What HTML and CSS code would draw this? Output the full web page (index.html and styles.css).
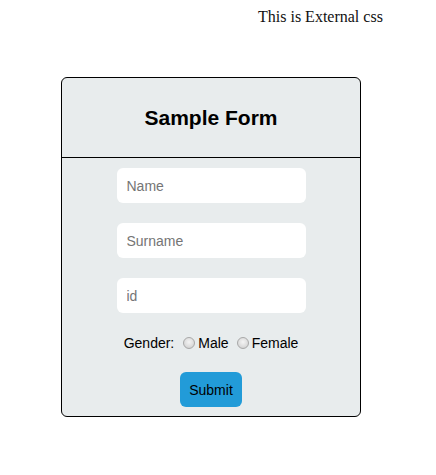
FILE: index.html
```html
<!DOCTYPE html>
<html>
<head>
<meta charset="utf-8">
<link rel="stylesheet" href="styles.css">
</head>
<body>
<div class="ext">This is External css</div>
<form class="card">
  <div class="card-head"><h2 class="title">Sample Form</h2></div>
  <div class="card-body">
    <input class="field" type="text" placeholder="Name">
    <input class="field" type="text" placeholder="Surname">
    <input class="field" type="text" placeholder="id">
    <div class="gender">
      <span class="lbl">Gender:</span>
      <label class="opt"><input class="radio" type="radio" name="g">Male</label>
      <label class="opt"><input class="radio" type="radio" name="g">Female</label>
    </div>
    <button class="submit" type="button">Submit</button>
  </div>
</form>
</body>
</html>
```
FILE: styles.css
```css
body {
  margin: 8px;
  font-family: "Liberation Serif", "Times New Roman", serif;
  background: #fff;
}
.ext {
  font-size: 16px;
  line-height: 18px;
  padding-left: 250px;
  color: #111;
}
.card {
  margin: 51px 0 0 53px;
  width: 298px;
  border: 1px solid #000;
  border-radius: 6px;
  background: #e8eced;
  font-family: "Liberation Sans", Arial, sans-serif;
}
.card-head {
  height: 79px;
  border-bottom: 1px solid #000;
  display: flex;
  align-items: center;
  justify-content: center;
}
.title {
  margin: 0;
  font-size: 21px;
  font-weight: bold;
  color: #000;
}
.card-body {
  display: flex;
  flex-direction: column;
  align-items: center;
  gap: 20px;
  padding: 10px 0 9px;
}
.field {
  box-sizing: border-box;
  width: 189px;
  height: 35px;
  border: none;
  border-radius: 6px;
  background: #fff;
  padding: 0 10px;
  font-family: "Liberation Sans", Arial, sans-serif;
  font-size: 14px;
  outline: none;
}
.field::placeholder {
  color: #757575;
}
.gender {
  height: 19px;
  display: flex;
  align-items: center;
  font-size: 14px;
  color: #000;
}
.lbl {
  margin-right: 9px;
}
.opt {
  display: flex;
  align-items: center;
  margin-right: 8px;
}
.opt:last-child {
  margin-right: 0;
}
.radio {
  appearance: none;
  -webkit-appearance: none;
  width: 12px;
  height: 12px;
  margin: 0 3px 0 0;
  border: 1px solid #a8a8a8;
  border-radius: 50%;
  background: radial-gradient(circle at 50% 40%, #f4f4f4 0%, #dcdcdc 60%, #c8c8c8 100%);
  box-sizing: border-box;
}
.submit {
  width: 62px;
  height: 35px;
  border: none;
  border-radius: 6px;
  background: #229bd8;
  color: #000;
  font-family: "Liberation Sans", Arial, sans-serif;
  font-size: 14px;
  padding: 0;
}
```
